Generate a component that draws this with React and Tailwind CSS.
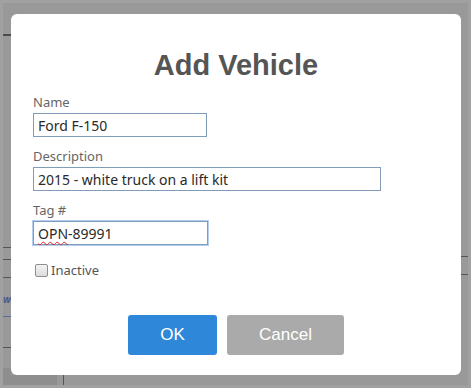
import React from 'react';

const labelCls = "block h-[16px] leading-[16px] text-[13px] text-[#666666]";
const inputCls = "h-[24px] border border-[#7f9db9] bg-white pl-[4px] flex items-center text-[14px] text-[#2a2a2a]";
const btnFont = { fontFamily: '"Liberation Sans", Arial, sans-serif' };

const Field = ({ label, width, focused, children }) => (
    <div className="mb-[11px]">
        <span className={labelCls}>{label}</span>
        <div
            className={`${inputCls} mt-[3px] ${width} ${focused ? "border-[#5f9be6] shadow-[0_0_0_1px_#b3cdf3]" : ""}`}
        >
            {children}
        </div>
    </div>
);

// strip of the dimmed page that shows beside the modal
const Rule = ({ className }) => <div className={`h-px w-full bg-[#555555] ${className}`} />;

export default function App() {
    return (
        <div
            className="w-[471px] h-[388px] bg-[#a1a1a1] p-[3px] overflow-hidden"
            style={{ fontFamily: '"Noto Sans", "Open Sans", sans-serif' }}
        >
            <div className="w-full h-full bg-[#999999] grid grid-cols-[8px_450px_7px] grid-rows-[11px_361px_10px]">
                {/* top band */}
                <div className="col-span-3 flex">
                    <div className="w-[8px] flex flex-col">
                        <div className="mt-[31px]" />
                    </div>
                </div>

                {/* left strip */}
                <div className="flex flex-col -mt-[11px] pt-[31px]">
                    <div className="h-[2px] w-full bg-[#4d4d4d]" />
                    <Rule className="mt-[211px]" />
                    <Rule className="mt-[11px]" />
                    <Rule className="mt-[17px]" />
                    <span className="mt-[16px] text-[10px] leading-none italic font-bold text-[#4b5a8c]">w</span>
                    <div className="mt-[12px] h-px w-full bg-[#5a6a96]" />
                    <Rule className="mt-[30px]" />
                    <div className="mt-auto h-[7px] bg-[#8e8e8e]" />
                </div>

                {/* modal */}
                <div className="bg-white rounded-[6px] pt-[33px] pl-[22px] pr-[22px]">
                    <h1 className="text-center text-[29px] leading-[36px] font-bold text-[#555555]" style={btnFont}>
                        Add Vehicle
                    </h1>

                    <div className="mt-[11px]">
                        <Field label="Name" width="w-[174px]">Ford F-150</Field>
                        <Field label="Description" width="w-[348px]">2015 - white truck on a lift kit</Field>
                        <Field label="Tag #" width="w-[175px]" focused>
                            <span className="underline decoration-wavy decoration-[#e02020] decoration-1 underline-offset-2">OPN</span>
                            -89991
                        </Field>
                    </div>

                    <label className="flex items-center mt-[18px] ml-[2px] h-[14px]">
                        <span className="w-[13px] h-[13px] rounded-[2px] border border-[#8f8f8f] bg-gradient-to-b from-[#f4f4f4] to-[#dcdcdc]" />
                        <span className="ml-[3px] text-[13px] text-[#555555] leading-[14px]">Inactive</span>
                    </label>

                    <div className="flex justify-center gap-[10px] mt-[38px]">
                        <button className="w-[89px] h-[40px] rounded-[3px] bg-[#2f87da] text-white text-[17px]" style={btnFont}>
                            OK
                        </button>
                        <button className="w-[117px] h-[40px] rounded-[3px] bg-[#aaaaaa] text-white text-[17px]" style={btnFont}>
                            Cancel
                        </button>
                    </div>
                </div>

                {/* right strip */}
                <div className="flex flex-col pt-[242px]">
                    <Rule />
                    <Rule className="mt-[17px]" />
                </div>

                {/* bottom band */}
                <div className="col-span-3 flex">
                    <div className="w-[54px] bg-[#8e8e8e]" />
                    <div className="w-[6px]" />
                    <div className="w-px bg-[#4a5570]" />
                </div>
            </div>
        </div>
    );
}
